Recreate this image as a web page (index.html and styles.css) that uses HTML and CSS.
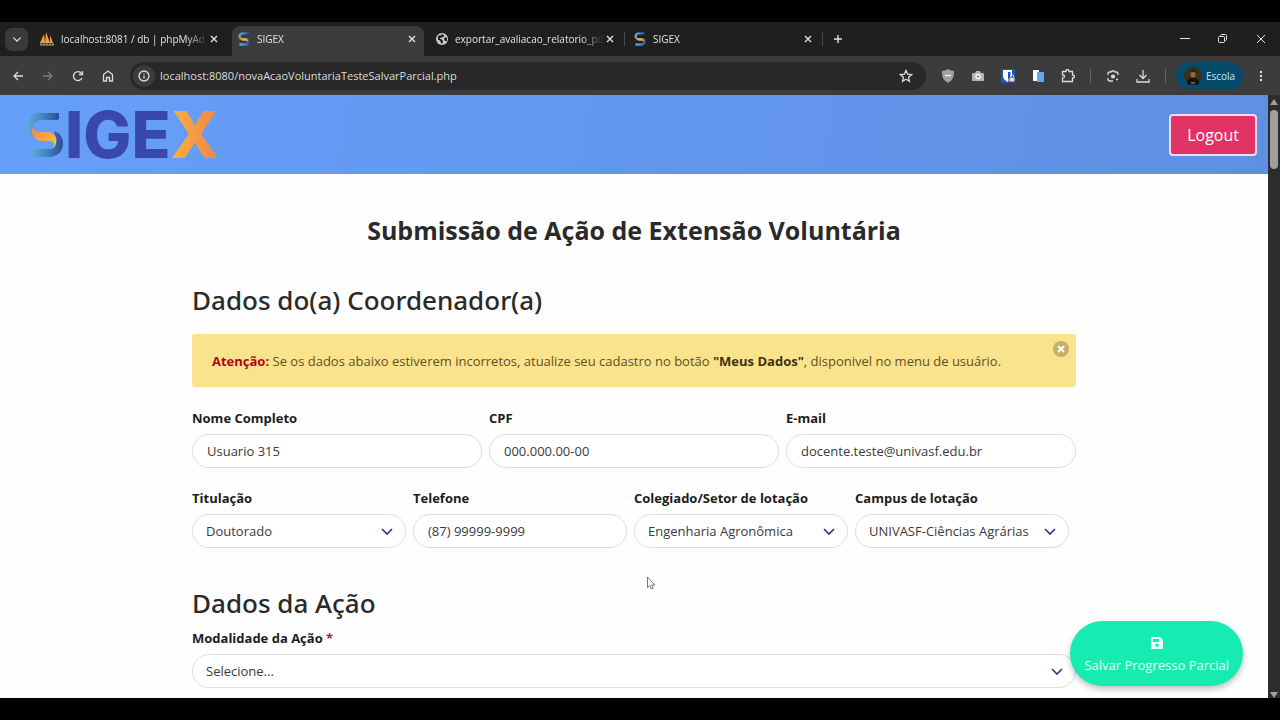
FILE: index.html
```html
<!DOCTYPE html>
<html lang="pt-BR">

<head>
    <meta charset="UTF-8">
    <meta name="viewport" content="width=device-width, initial-scale=1.0">
    <title>SIGEX</title>
    <link rel="stylesheet" href="styles.css">
</head>

<body>
    <svg class="defs" width="0" height="0" aria-hidden="true">
        <defs>
            <linearGradient id="blue-top" x1="0" y1="0" x2="1" y2="0">
                <stop offset="0" stop-color="#5fb0dc" />
                <stop offset="0.5" stop-color="#4287c0" />
                <stop offset="1" stop-color="#2d4c96" />
            </linearGradient>
            <linearGradient id="orange-mid" x1="0" y1="0" x2="1" y2="1">
                <stop offset="0" stop-color="#ee8350" />
                <stop offset="1" stop-color="#fbc53f" />
            </linearGradient>
            <symbol id="mark" viewBox="0 0 38 46">
                <path d="M34 1H16C6 1 1 7 1 14c0 6 3 9 7 12l1-11c0-5 3-7 8-7h15q2 0 2-2z" fill="url(#blue-top)" />
                <path d="M5 37h19c5 0 7-2 7-6l-2-12c6 2 9 7 9 12 0 9-6 14-14 14H4v-6q0-2 1-2z" fill="url(#blue-top)" />
                <path d="M7 13c-2 10 3 16 11 16h7c4 0 5 2 3 7 6-6 4-16-6-16h-6c-5 0-9-2-9-7z" fill="url(#orange-mid)" />
            </symbol>
            <symbol id="close" viewBox="0 0 12 12">
                <path d="M3 3l6 6M9 3l-6 6" fill="none" stroke="currentColor" stroke-width="1.4" />
            </symbol>
            <symbol id="chevron" viewBox="0 0 14 14">
                <path d="M2 5l5 5 5-5" fill="none" stroke="currentColor" stroke-width="1.7" />
            </symbol>
        </defs>
    </svg>

    <div class="browser">
        <div class="tab-bar">
            <button class="tab-search" aria-label="Pesquisar guias">
                <svg width="10" height="10"><use href="#chevron" /></svg>
            </button>
            <div class="tabs">
                <div class="tab">
                    <svg width="14" height="14" viewBox="0 0 14 14">
                        <path d="M0 11L4 2l1 9zM5 11l1-11 4 11zM10 11l0-8 3 8z" fill="#f0a040" />
                        <path d="M0 13h14M1 11v2M4 11v2M7 11v2M10 11v2M13 11v2" stroke="#b8a48c" stroke-width="1" />
                    </svg>
                    <span class="tab-title">localhost:8081 / db | phpMyAd</span>
                    <button aria-label="Fechar guia"><svg width="12" height="12"><use href="#close" /></svg></button>
                </div>
                <div class="tab active">
                    <svg width="12" height="14"><use href="#mark" /></svg>
                    <span class="tab-title">SIGEX</span>
                    <button aria-label="Fechar guia"><svg width="12" height="12"><use href="#close" /></svg></button>
                </div>
                <div class="tab divided">
                    <svg width="12" height="12" viewBox="0 0 12 12">
                        <circle cx="6" cy="6" r="6" fill="#c8cacc" />
                        <path d="M2 3c2-1 3 0 4-2 2 1 3 2 1 3-1 1-3 0-3 2 2 0 3 1 3 3l-1 2C4 9 5 7 2 7zM9 4l2 1v3H9L8 6z" fill="#1f1f1f" />
                    </svg>
                    <span class="tab-title">exportar_avaliacao_relatorio_pd</span>
                    <button aria-label="Fechar guia"><svg width="12" height="12"><use href="#close" /></svg></button>
                </div>
                <div class="tab divided">
                    <svg width="12" height="14"><use href="#mark" /></svg>
                    <span class="tab-title">SIGEX</span>
                    <button aria-label="Fechar guia"><svg width="12" height="12"><use href="#close" /></svg></button>
                </div>
            </div>
            <button class="new-tab" aria-label="Nova guia">
                <svg width="10" height="10" viewBox="0 0 10 10"><path d="M5 1v8M1 5h8" stroke="currentColor" stroke-width="1.4" /></svg>
            </button>
            <div class="window-controls">
                <button aria-label="Minimizar">
                    <svg width="10" height="10" viewBox="0 0 10 10"><path d="M0 4.500h10" stroke="currentColor" /></svg>
                </button>
                <button aria-label="Restaurar">
                    <svg width="10" height="10" viewBox="0 0 10 10" fill="none" stroke="currentColor">
                        <rect x="0.500" y="2.500" width="6" height="6" rx="1" />
                        <path d="M2.500 1.500c0-1 1-1 1-1h4c1 0 1 1 1 1v4c0 1-1 1-1 1" />
                    </svg>
                </button>
                <button aria-label="Fechar">
                    <svg width="10" height="10" viewBox="0 0 10 10"><path d="M1 1l8 8M9 1l-8 8" stroke="currentColor" /></svg>
                </button>
            </div>
        </div>

        <div class="toolbar">
            <button aria-label="Voltar">
                <svg class="line" width="12" height="12" viewBox="0 0 12 12"><path d="M11 6H2M6 2L2 6l4 4" /></svg>
            </button>
            <button class="disabled" aria-label="Avançar">
                <svg class="line" width="12" height="12" viewBox="0 0 12 12"><path d="M1 6h9M6 2l4 4-4 4" /></svg>
            </button>
            <button aria-label="Recarregar">
                <svg class="line" width="12" height="12" viewBox="0 0 12 12"><path d="M10 8A4.500 4.500 0 1 1 9.500 3.300M10.500 1v3.500H7" /></svg>
            </button>
            <button aria-label="Página inicial">
                <svg class="line" width="12" height="12" viewBox="0 0 12 12"><path d="M1.500 11V4.500L6 1l4.500 3.500V11H7.500V7.500h-3V11z" /></svg>
            </button>
            <div class="address">
                <button class="site-info" aria-label="Informações do site">
                    <svg class="line" width="12" height="12" viewBox="0 0 12 12"><circle cx="6" cy="6" r="5" /><path d="M6 5.500v3M6 3.300v1" /></svg>
                </button>
                <input type="text" aria-label="Endereço" value="localhost:8080/novaAcaoVoluntariaTesteSalvarParcial.php">
                <button aria-label="Favoritar">
                    <svg class="line" width="14" height="14" viewBox="0 0 14 14"><path d="M7 1.500l1.600 3.700 4 .4-3 2.700.9 4L7 10.200l-3.500 2.100.9-4-3-2.700 4-.4z" /></svg>
                </button>
            </div>
            <button aria-label="uBlock">
                <svg width="14" height="14" viewBox="0 0 14 14"><path d="M7 0c2 1 4 2 6 2 0 6-1 9-6 12C2 11 1 8 1 2c2 0 4-1 6-2z" fill="#a0a0a0" /><path d="M4 6.500h6" stroke="#eee" stroke-width="1.500" /></svg>
            </button>
            <button aria-label="Captura de tela">
                <svg width="12" height="12" viewBox="0 0 12 12"><path d="M1 3h2l1-2h4l1 2h2q1 0 1 1v6q0 1-1 1H1q-1 0-1-1V4q0-1 1-1z" fill="#b4b4b4" /><circle cx="6" cy="6.500" r="2.700" fill="#fff" /><circle cx="6" cy="6.500" r="1.300" fill="#888" /></svg>
            </button>
            <button aria-label="Bitwarden">
                <svg width="14" height="14" viewBox="0 0 14 14"><rect width="14" height="14" rx="1" fill="#1c55c8" /><path d="M2 1h9v6c0 3-2 4-4.500 6C4 11 2 10 2 7z" fill="#fff" /><path d="M7 3h2.500v4c0 2-1 2-2.500 3z" fill="#1c55c8" /><rect x="8" y="8" width="6" height="5" rx="1" fill="#ddd" stroke="#444" /><path d="M9.500 8V6.500q1.500-2 3 0V8" fill="none" stroke="#ddd" /></svg>
            </button>
            <button aria-label="Extensão">
                <svg width="12" height="14" viewBox="0 0 12 14"><rect x="1" y="1" width="6" height="11" fill="#fff" /><rect x="5" y="3" width="7" height="10" rx="1" fill="#6ba6f3" /></svg>
            </button>
            <button aria-label="Extensões">
                <svg class="line" width="14" height="14" viewBox="0 0 14 14"><path d="M1.500 2.500H5q0-2 1.500-2t1.500 2h3.500V6q2 0 2 1.500t-2 1.500v3.500h-10V9q2 0 2-1.500T1.500 6z" /></svg>
            </button>
            <span class="separator"></span>
            <button aria-label="Google Lens">
                <svg class="line" width="12" height="12" viewBox="0 0 12 12"><path d="M1 5V3.500Q1 2 3 2h1l1-1h2l1 1h1q2 0 2 2v1M1 8v1q0 2 2 2h3" /><circle cx="6" cy="6.500" r="1.400" fill="currentColor" /><path d="M9 9.500h2" /></svg>
            </button>
            <button aria-label="Downloads">
                <svg class="line" width="14" height="14" viewBox="0 0 14 14"><path d="M7 1v8M3.500 6L7 9.500 10.500 6M1 10v3h12v-3" /></svg>
            </button>
            <span class="separator"></span>
            <button class="profile">
                <svg width="18" height="18" viewBox="0 0 18 18"><circle cx="9" cy="9" r="9" fill="#3a3018" /><path d="M3 17c0-5 3-6 6-6s6 1 6 6q-6 2-12 0z" fill="#17130f" /><ellipse cx="9" cy="7" rx="2.500" ry="3.500" fill="#9a6746" /><path d="M6 6q0-4 3-4t3 4q-3-2-6 0z" fill="#33200f" /><path d="M7 16h4" stroke="#b9a691" /></svg>
                Escola
            </button>
            <button aria-label="Menu">
                <svg width="4" height="12" viewBox="0 0 4 12" fill="currentColor"><circle cx="2" cy="2" r="1.200" /><circle cx="2" cy="6" r="1.200" /><circle cx="2" cy="10" r="1.200" /></svg>
            </button>
        </div>

        <div class="viewport">
            <div class="page">
                <header class="header">
                    <a class="logo" href="#" aria-label="SIGEX">
                        <svg width="38" height="46"><use href="#mark" /></svg>
                        <span>IGE<span class="logo-x">X</span></span>
                    </a>
                    <button class="logout">Logout</button>
                </header>

                <main class="container">
                    <h1>Submissão de Ação de Extensão Voluntária</h1>

                    <h2>Dados do(a) Coordenador(a)</h2>
                    <div class="notification">
                        <p><strong class="danger">Atenção:</strong> Se os dados abaixo estiverem incorretos, atualize seu cadastro no botão <strong>"Meus Dados"</strong>, disponivel no menu de usuário.</p>
                        <button class="delete" aria-label="Fechar aviso">
                            <svg width="16" height="16" viewBox="0 0 16 16"><path d="M5 5l6 6M11 5l-6 6" stroke="#fff" stroke-width="2" /></svg>
                        </button>
                    </div>

                    <div class="row three">
                        <div class="field">
                            <label for="nome">Nome Completo</label>
                            <input type="text" id="nome" value="Usuario 315">
                        </div>
                        <div class="field">
                            <label for="cpf">CPF</label>
                            <input type="text" id="cpf" value="000.000.00-00">
                        </div>
                        <div class="field">
                            <label for="email">E-mail</label>
                            <input type="email" id="email" value="docente.teste@univasf.edu.br">
                        </div>
                    </div>

                    <div class="row four">
                        <div class="field">
                            <label for="titulacao">Titulação</label>
                            <div class="select">
                                <select id="titulacao"><option>Doutorado</option></select>
                                <svg width="14" height="14"><use href="#chevron" /></svg>
                            </div>
                        </div>
                        <div class="field">
                            <label for="telefone">Telefone</label>
                            <input type="tel" id="telefone" value="(87) 99999-9999">
                        </div>
                        <div class="field">
                            <label for="colegiado">Colegiado/Setor de lotação</label>
                            <div class="select">
                                <select id="colegiado"><option>Engenharia Agronômica</option></select>
                                <svg width="14" height="14"><use href="#chevron" /></svg>
                            </div>
                        </div>
                        <div class="field">
                            <label for="campus">Campus de lotação</label>
                            <div class="select">
                                <select id="campus"><option>UNIVASF-Ciências Agrárias</option></select>
                                <svg width="14" height="14"><use href="#chevron" /></svg>
                            </div>
                        </div>
                    </div>

                    <h2 class="section">Dados da Ação</h2>
                    <div class="field">
                        <label for="modalidade">Modalidade da Ação <span class="required">*</span></label>
                        <div class="select">
                            <select id="modalidade"><option>Selecione...</option></select>
                            <svg width="14" height="14"><use href="#chevron" /></svg>
                        </div>
                    </div>
                </main>

                <button class="save">
                    <svg width="12" height="12" viewBox="0 0 12 12"><path fill-rule="evenodd" d="M1 0h8l3 3v8q0 1-1 1H1q-1 0-1-1V1q0-1 1-1zM2 2v3h6V2zM6 6.500a1.700 1.700 0 1 0 .01 0z" fill="currentColor" /></svg>
                    Salvar Progresso Parcial
                </button>
            </div>
            <div class="scrollbar">
                <svg width="10" height="6" viewBox="0 0 10 6"><path d="M5 0l4 6H1z" fill="#a0a0a0" /></svg>
                <span class="thumb"></span>
                <svg width="10" height="6" viewBox="0 0 10 6"><path d="M5 6l4-6H1z" fill="#a0a0a0" /></svg>
            </div>
        </div>
    </div>

    <svg class="cursor" width="10" height="14" viewBox="0 0 10 14"><path d="M1.500 1v10.500l2.300-2 1.700 3.500 1.700-.8L5.700 9h3z" fill="#fff" stroke="#555" stroke-width="0.800" /></svg>
</body>

</html>
```
FILE: styles.css
```css
* {
    box-sizing: border-box;
}

body {
    margin: 0;
    background-color: #000;
    color: #2d2d2d;
    font-family: "Open Sans", "Noto Sans", sans-serif;
    font-size: 13px;
}

button,
input,
select {
    font-family: inherit;
    font-size: inherit;
    color: inherit;
    margin: 0;
}

button {
    display: flex;
    justify-content: center;
    align-items: center;
    padding: 0;
    border: none;
    background: none;
    cursor: pointer;
}

svg {
    flex-shrink: 0;
}

.defs {
    position: absolute;
}

.browser {
    display: flex;
    flex-direction: column;
    height: 100vh;
    padding: 22px 0;
}

/* tabs */
.tab-bar {
    display: flex;
    align-items: center;
    height: 34px;
    padding: 0 0 0 5px;
    background-color: #1f1f1f;
    color: #e3e3e3;
    font-size: 10px;
}

.tab-search {
    width: 23px;
    height: 23px;
    margin-right: 6px;
    border-radius: 7px;
    background-color: #3a3a3a;
}

.tabs {
    display: flex;
    align-self: flex-end;
    gap: 6px;
}

.tab {
    position: relative;
    display: flex;
    align-items: center;
    gap: 7px;
    width: 192px;
    height: 30px;
    padding: 0 6px 4px;
    border-radius: 8px 8px 0 0;
}

.tab.active {
    background-color: #3c3c3c;
}

.tab.divided::after {
    content: "";
    position: absolute;
    right: -3px;
    top: 6px;
    width: 1px;
    height: 14px;
    background-color: #4a4a4a;
}

.tab-title {
    flex: 1;
    overflow: hidden;
    margin-right: -7px;
    white-space: nowrap;
    mask-image: linear-gradient(to right, #000 85%, transparent);
}

.new-tab {
    width: 24px;
    height: 24px;
    margin-left: 6px;
}

.window-controls {
    display: flex;
    margin-left: auto;
}

.window-controls button {
    width: 38px;
    height: 34px;
}

/* toolbar */
.toolbar {
    display: flex;
    align-items: center;
    height: 39px;
    padding: 0 4px 0 3px;
    background-color: #3c3c3c;
    color: #dcdcdc;
    font-size: 11px;
}

.toolbar button {
    width: 30px;
    height: 28px;
}

.toolbar .disabled {
    color: #7c7c7c;
}

.line {
    fill: none;
    stroke: currentColor;
    stroke-width: 1.3;
}

.address {
    display: flex;
    align-items: center;
    flex: 1;
    height: 28px;
    margin: 0 7px;
    padding: 0 5px 0 3px;
    border-radius: 14px;
    background-color: #282828;
}

.address input {
    flex: 1;
    min-width: 0;
    padding: 0 5px;
    border: none;
    background: none;
}

.toolbar .site-info {
    width: 22px;
    height: 22px;
    border-radius: 50%;
    background-color: #3c3c3c;
}

.separator {
    width: 1px;
    height: 14px;
    margin: 0 7px;
    background-color: #666;
}

.toolbar .profile {
    gap: 4px;
    width: 67px;
    margin: 0 3px;
    border-radius: 14px;
    background-color: #064a6c;
    color: #c8e8fa;
    font-size: 10px;
}

/* page */
.viewport {
    display: flex;
    flex: 1;
    min-height: 0;
}

.page {
    position: relative;
    flex: 1;
    overflow: hidden;
    background-color: #fefefe;
}

.scrollbar {
    display: flex;
    flex-direction: column;
    align-items: center;
    width: 12px;
    padding: 4px 0 0;
    background-color: #2c2c2c;
}

.thumb {
    width: 8px;
    height: 59px;
    margin: 5px 0 auto;
    border-radius: 4px;
    background-color: #9f9f9f;
}

.header {
    display: flex;
    justify-content: space-between;
    align-items: center;
    height: 79px;
    padding: 0 11px 0 25px;
    background-image: linear-gradient(100deg, #669ffa, #5f8fe2);
}

.logo {
    display: flex;
    align-items: center;
    gap: 2px;
    color: #3949ab;
    font-family: Inter, sans-serif;
    font-size: 64px;
    font-weight: 800;
    line-height: 76px;
    text-decoration: none;
}

.logo-x {
    background-image: linear-gradient(to right, #fbb040, #f08548);
    background-clip: text;
    color: transparent;
}

.logout {
    padding: 0 16px;
    height: 42px;
    border: 2px solid #f6dcea;
    border-radius: 4px;
    background-color: #e13266;
    color: #fff;
    font-size: 16px;
}

.container {
    padding: 39px 15vw 0;
}

h1,
h2 {
    margin: 0;
    color: #2a2a2a;
    font-size: 25px;
    line-height: 35px;
}

h1 {
    margin-bottom: 35px;
    font-weight: 700;
    text-align: center;
}

h2 {
    font-family: "Noto Sans", "Open Sans", sans-serif;
    font-size: 26px;
    font-weight: 500;
}

.section {
    margin: 38px 0 7px;
}

.notification {
    position: relative;
    margin: 16px 0 21px;
    padding: 17px 20px 16px;
    border-radius: 3px;
    background-color: #fbe38d;
    color: #61511c;
}

.notification p {
    margin: 0;
    line-height: 20px;
}

.notification strong {
    color: #3f3210;
}

.notification .danger {
    color: #b00610;
}

.delete {
    position: absolute;
    top: 7px;
    right: 7px;
    width: 16px;
    height: 16px;
    border-radius: 50%;
    background-color: #c3b06d;
}

.row {
    display: grid;
    gap: 7px;
}

.three {
    grid-template-columns: repeat(3, 1fr);
    margin-bottom: 20px;
}

.four {
    grid-template-columns: repeat(4, 1fr);
    padding-right: 7px;
}

.field label {
    display: block;
    margin-bottom: 6px;
    color: #1c1c1c;
    font-weight: 700;
    line-height: 20px;
}

.required {
    color: #b3123c;
}

.field input,
.field select {
    display: block;
    width: 100%;
    height: 34px;
    padding: 0 14px;
    border: 1px solid #dedede;
    border-radius: 17px;
    background-color: #fff;
    color: #3a3a3a;
}

.field select {
    appearance: none;
    padding: 0 13px;
}

.select {
    position: relative;
}

.select svg {
    position: absolute;
    top: 10px;
    right: 12px;
    color: #3d3580;
    pointer-events: none;
}

.save {
    position: absolute;
    right: 25px;
    bottom: 12px;
    flex-direction: column;
    gap: 7px;
    height: 65px;
    padding: 4px 14px 0;
    border-radius: 33px;
    background-color: #16ebb2;
    box-shadow: 0 3px 6px rgba(0, 0, 0, 0.25);
    color: #e9fff8;
}

.cursor {
    position: absolute;
    left: 646px;
    top: 576px;
}
```
